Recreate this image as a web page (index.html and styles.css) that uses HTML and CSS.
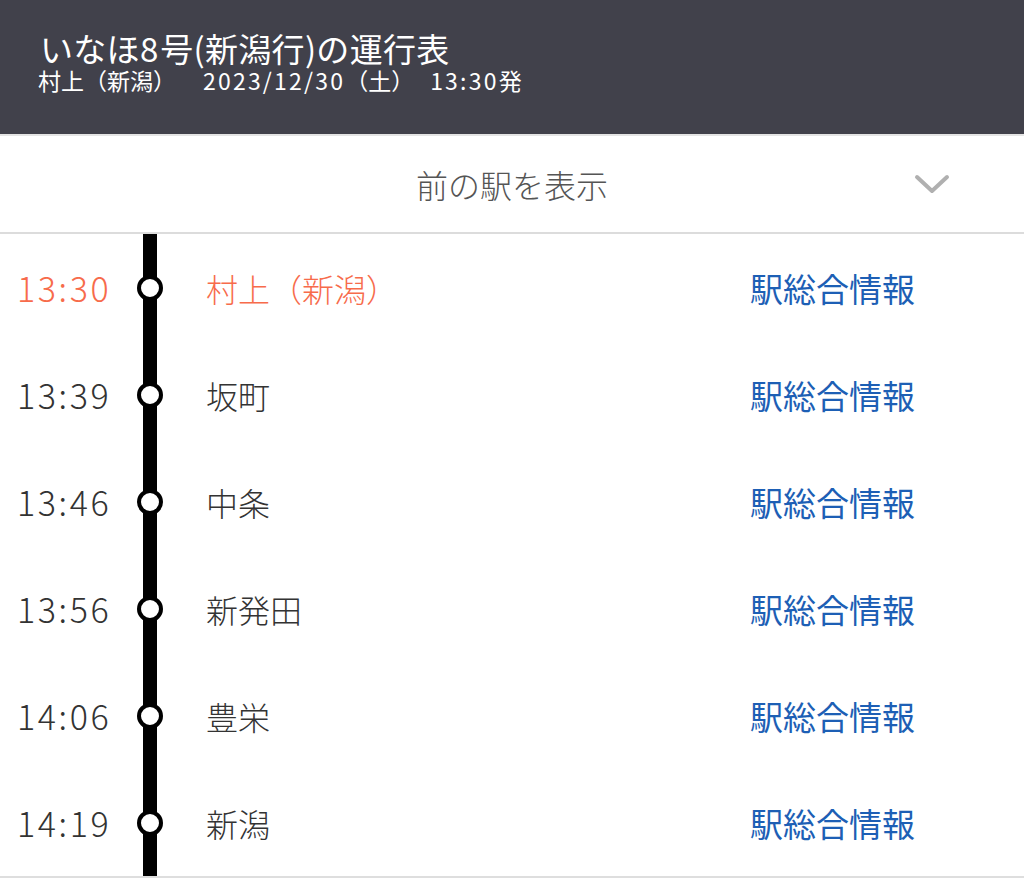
FILE: index.html
```html
<!DOCTYPE html>
<html lang="ja">
<head>
<meta charset="utf-8">
<link rel="stylesheet" href="styles.css">
</head>
<body>
<header class="header">
  <h1 class="title">いなほ<span class="num">8</span>号(新潟行)の運行表</h1>
  <p class="sub"><span class="from">村上（新潟）</span><span class="num">2023/12/30</span><span>（土）</span><span class="num dep">13:30</span>発</p>
</header>
<div class="toggle">
  <span class="toggle-text">前の駅を表示</span>
  <svg class="chev" width="36" height="20" viewBox="0 0 36 20"><polyline points="3,3 18,17 33,3" fill="none" stroke="#b0b0b0" stroke-width="4" stroke-linecap="round" stroke-linejoin="round"/></svg>
</div>
<ul class="stops">
  <li class="stop current"><span class="time">13:30</span><span class="track"><span class="dot"></span></span><span class="name">村上（新潟）</span><a class="info">駅総合情報</a></li>
  <li class="stop"><span class="time">13:39</span><span class="track"><span class="dot"></span></span><span class="name">坂町</span><a class="info">駅総合情報</a></li>
  <li class="stop"><span class="time">13:46</span><span class="track"><span class="dot"></span></span><span class="name">中条</span><a class="info">駅総合情報</a></li>
  <li class="stop"><span class="time">13:56</span><span class="track"><span class="dot"></span></span><span class="name">新発田</span><a class="info">駅総合情報</a></li>
  <li class="stop"><span class="time">14:06</span><span class="track"><span class="dot"></span></span><span class="name">豊栄</span><a class="info">駅総合情報</a></li>
  <li class="stop"><span class="time">14:19</span><span class="track"><span class="dot"></span></span><span class="name">新潟</span><a class="info">駅総合情報</a></li>
</ul>
</body>
</html>
```
FILE: styles.css
```css
html, body {
  margin: 0;
  padding: 0;
  background: #fff;
  font-family: "Noto Sans CJK JP", "Noto Sans", sans-serif;
}
.header {
  box-sizing: border-box;
  height: 136px;
  background: #41414b;
  padding: 29px 0 0 40px;
  border-bottom: 2px solid #e4e4e4;
}
.title {
  margin: 0;
  font-size: 33px;
  font-weight: 400;
  line-height: 38px;
  color: #fff;
  letter-spacing: 0.3px;
}
.title .num {
  letter-spacing: 2px;
}
.sub {
  margin: 0 0 0 -2px;
  font-size: 23px;
  line-height: 26px;
  color: #fff;
  white-space: nowrap;
}
.sub .from {
  margin-right: 27px;
}
.sub .num {
  letter-spacing: 2.2px;
}
.sub .dep {
  margin-left: 16px;
}
.toggle {
  height: 96px;
  border-bottom: 2px solid #dcdcdc;
  display: flex;
  align-items: center;
  justify-content: center;
  position: relative;
}
.toggle-text {
  font-size: 32px;
  color: #555;
  font-weight: 300;
}
.chev {
  position: absolute;
  right: 74px;
  top: 38px;
}
.stops {
  list-style: none;
  margin: 0;
  padding: 0;
  border-bottom: 2px solid #dedede;
}
.stop {
  height: 107px;
  display: grid;
  grid-template-columns: 120px 26px 1fr 274px;
  align-items: center;
  padding-left: 17px;
}
.time {
  font-size: 34px;
  color: #333;
  font-weight: 300;
  letter-spacing: 2.6px;
}
.track {
  align-self: stretch;
  display: flex;
  align-items: center;
  justify-content: center;
  position: relative;
}
.track::before {
  content: "";
  position: absolute;
  top: 0;
  bottom: 0;
  left: 6px;
  width: 14px;
  background: #000;
}
.dot {
  position: relative;
  width: 18px;
  height: 18px;
  border: 4px solid #000;
  border-radius: 50%;
  background: #fff;
}
.name {
  font-size: 32px;
  color: #333;
  padding-left: 43px;
  font-weight: 300;
}
.info {
  font-size: 33px;
  color: #1d5fb5;
}
.current .time,
.current .name {
  color: #f76b4b;
}
```
